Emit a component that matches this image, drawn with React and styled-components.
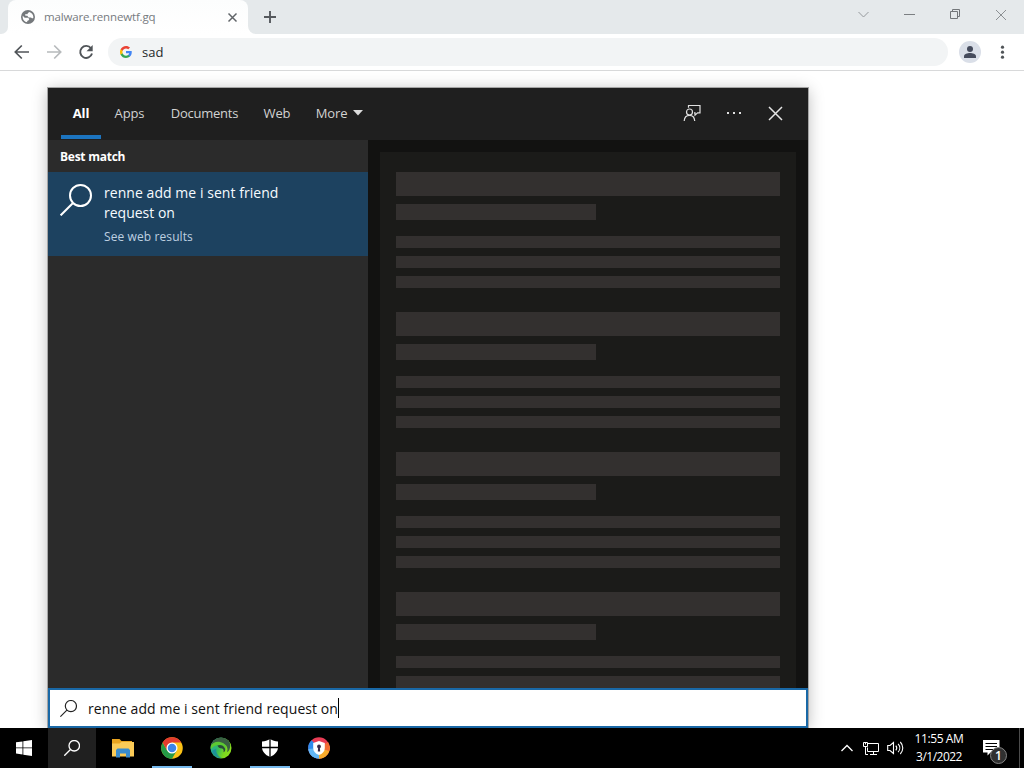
import React from "react";
import styled, { createGlobalStyle, css } from "styled-components";

const Global = createGlobalStyle`
  * { box-sizing: border-box; }
  body { margin: 0; background: #fff; overflow: hidden; font-family: "Open Sans", "Noto Sans", sans-serif; }
  svg { display: block; flex: none; }
`;

const Screen = styled.div`
  position: relative;
  width: 1024px;
  height: 768px;
  display: flex;
  flex-direction: column;
  background: #fff;
  overflow: hidden;
`;

const Label = styled.span`
  display: block;
  white-space: nowrap;
  font-size: ${(p) => p.$size || 13}px;
  font-weight: ${(p) => p.$weight || 400};
  line-height: ${(p) => p.$line || 20}px;
  letter-spacing: ${(p) => p.$track || 0}px;
  color: ${(p) => p.$color || "inherit"};
`;

/* Browser */
const TabStrip = styled.div`
  display: flex;
  height: 34px;
  background: #e5e9eb;
`;
const StripStart = styled.div`
  width: 8px;
  background: #e5e9eb;
  border-bottom-right-radius: 7px;
`;
const TabBase = styled.div`
  display: flex;
  background: #fff;
`;
const Tab = styled.div`
  display: flex;
  align-items: center;
  width: 240px;
  height: 34px;
  padding: 0 10px 0 12px;
  background: linear-gradient(#fcfdfd, #fff);
  border-radius: 8px 8px 0 0;
`;
const TabTitle = styled(Label)`
  flex: 1;
  margin-left: 8px;
`;
const StripRest = styled.div`
  display: flex;
  flex: 1;
  align-items: center;
  background: #e5e9eb;
  border-bottom-left-radius: 8px;
  padding: 0 17px 0 14px;
`;
const StripBack = styled.div`
  display: flex;
  flex: 1;
  background: linear-gradient(#e5e9eb 0 20px, #fff 20px);
`;
const WindowControls = styled.div`
  display: flex;
  align-items: center;
  gap: 30px;
  margin-left: auto;
  margin-top: -5px;
`;
const Toolbar = styled.div`
  display: flex;
  align-items: center;
  height: 37px;
  padding: 0 17px 0 14px;
  border-bottom: 1px solid #d8d9da;
`;
const NavIcons = styled.div`
  display: flex;
  gap: 16px;
`;
const Address = styled.div`
  display: flex;
  align-items: center;
  flex: 1;
  height: 28px;
  margin: 0 11px 0 14px;
  padding-left: 12px;
  border-radius: 14px;
  background: #f2f4f5;
`;
const AddressText = styled(Label)`
  margin-left: 10px;
`;
const Avatar = styled.div`
  display: flex;
  width: 22px;
  height: 22px;
  border-radius: 50%;
  background: #dadfe8;
  align-items: center;
  justify-content: center;
  margin-right: 17px;
`;
const Page = styled.div`
  flex: 1;
  background: #fff;
`;

/* Search flyout, floating above the page */
const Flyout = styled.div`
  position: absolute;
  left: 48px;
  top: 88px;
  width: 760px;
  height: 640px;
  display: flex;
  flex-direction: column;
  background: #1f1f1f;
  box-shadow: 0 0 0 1px #a5a5a5, 0 2px 15px rgba(0, 0, 0, 0.28);
`;
const Header = styled.div`
  display: flex;
  height: 52px;
  padding: 0 24px 0 13px;
`;
const Scope = styled.div`
  display: flex;
  align-items: center;
  justify-content: center;
  width: ${(p) => p.$width}px;
  height: 51px;
  padding-top: ${(p) => (p.$active ? 3 : 0)}px;
  padding-bottom: ${(p) => (p.$active ? 0 : 1)}px;
  margin-right: ${(p) => p.$gap || 0}px;
  border-bottom: ${(p) => (p.$active ? "4px solid #1c74bf" : "0")};
  gap: 6px;
`;
const HeaderActions = styled.div`
  display: flex;
  align-items: center;
  margin-left: auto;
  gap: 24px;
  padding-bottom: 2px;
`;
const Body = styled.div`
  display: flex;
  flex: 1;
  min-height: 0;
`;
const Results = styled.div`
  width: 320px;
  background: #2b2b2b;
`;
const GroupTitle = styled.div`
  height: 32px;
  padding: 7px 12px;
`;
const Match = styled.div`
  display: flex;
  height: 84px;
  padding: 11px 12px;
  gap: 12px;
  background: #1d4260;
`;
const MatchIcon = styled.div`
  padding-top: 1px;
`;
const MatchText = styled.div`
  display: flex;
  flex-direction: column;
`;
const MatchHint = styled(Label)`
  margin-top: 4px;
`;
const Preview = styled.div`
  flex: 1;
  overflow: hidden;
  padding: 12px 12px 0;
  background: #121211;
`;
const PreviewCard = styled.div`
  height: 100%;
  padding: 20px 16px 0;
  background: #1b1b19;
`;
const Skeleton = styled.div`
  display: flex;
  flex-direction: column;
  gap: 8px;
  height: 140px;
`;
const Bar = styled.div`
  flex: none;
  width: ${(p) => p.$width || 384}px;
  height: ${(p) => p.$height || 12}px;
  margin-top: ${(p) => p.$top || 0}px;
  background: #33302f;
`;
const SearchBox = styled.div`
  display: flex;
  align-items: center;
  height: 40px;
  padding: 0 10px;
  border: 2px solid #1968a6;
  background: #fff;
`;
const Query = styled(Label)`
  margin-left: 11px;
  padding-top: 1px;
`;
const Caret = styled.div`
  width: 1px;
  height: 20px;
  background: #000;
`;

/* Taskbar */
const Taskbar = styled.div`
  position: relative;
  z-index: 1;
  display: flex;
  height: 40px;
  background: #000;
`;
const TaskButton = styled.div`
  display: flex;
  align-items: center;
  justify-content: center;
  width: ${(p) => p.$width || 49}px;
  height: 40px;
  background: ${(p) => (p.$pressed ? "#202020" : "transparent")};
  ${(p) =>
    p.$running &&
    css`
      background: linear-gradient(#76b9ed, #76b9ed) center bottom / 40px 2px no-repeat;
    `}
`;
const Tray = styled.div`
  display: flex;
  align-items: center;
  margin-left: auto;
`;
const TrayIcons = styled.div`
  display: flex;
  align-items: center;
  gap: 8px;
`;
const Clock = styled.div`
  display: flex;
  flex-direction: column;
  align-items: center;
  width: 68px;
  margin: 0 10px 0 1px;
`;
const Notices = styled.div`
  position: relative;
  width: 29px;
  height: 40px;
  margin-right: 7px;
  padding-top: 12px;
`;
const Badge = styled.div`
  position: absolute;
  left: 7px;
  top: 19px;
  width: 17px;
  height: 17px;
  border: 1px solid #858585;
  border-radius: 50%;
  background: #303030;
  color: #fff;
  font-size: 12px;
  font-weight: 600;
  line-height: 15px;
  text-align: center;
`;
const ShowDesktop = styled.div`
  width: 5px;
  height: 40px;
  border-left: 1px solid #4b4b4b;
`;

const Globe = () => (
  <svg width="16" height="16" viewBox="0 0 24 24">
    <path fill="#75797c" d="M12 1.500a10.500 10.500 0 1 0 0 21 10.500 10.500 0 0 0 0-21zm-1.200 18.500C6.900 19.500 4 16.100 4 12c0-.6.100-1.200.2-1.800L7 13h5l2 2-1 2-2.200 1zm7-6c-.3-.8-1-1.400-1.900-1.400h-3L11 10H8V7.500l3 .5 1-2 2-1.500c3 .7 6 3.800 6 7.500 0 .8-.1 1.500-.4 2z" />
  </svg>
);
const Cross = ({ size, color, w, pad = 1 }) => (
  <svg width={size} height={size} viewBox={`0 0 ${size} ${size}`} fill="none" stroke={color} strokeWidth={w}>
    <path d={`M${pad} ${pad}L${size - pad} ${size - pad}M${size - pad} ${pad}L${pad} ${size - pad}`} />
  </svg>
);
const Plus = () => (
  <svg width="16" height="16" fill="none" stroke="#55595d" strokeWidth="1.900">
    <path d="M8 2v12M2 8h12" />
  </svg>
);
const Arrow = ({ color, flip }) => (
  <svg width="16" height="16" viewBox="0 0 16 16" fill="none" stroke={color} strokeWidth="1.700">
    <path d={flip ? "M1 8h13M8.200 1.500L14.700 8l-6.500 6.500" : "M15 8H2M7.800 1.500L1.300 8l6.500 6.500"} />
  </svg>
);
const Reload = () => (
  <svg width="16" height="16" viewBox="0 0 16 16">
    <path d="M13 4.300A6 6 0 1 0 14 9.500" fill="none" stroke="#505458" strokeWidth="1.900" />
    <path d="M14.700 1v6.200H8.500z" fill="#505458" />
  </svg>
);
const Google = () => (
  <svg width="12" height="12" viewBox="0 0 48 48">
    <path fill="#4285f4" d="M47 24.500c0-1.600-.2-3.200-.4-4.500H24v9h13c-.6 3-2.300 5.500-4.800 7.200v6h7.700C44.400 38 47 31.800 47 24.500z" />
    <path fill="#34a853" d="M24 48c6.500 0 11.900-2.100 15.900-5.800l-7.700-6c-2.200 1.400-4.900 2.300-8.200 2.300-6.300 0-11.600-4.200-13.500-9.900h-8v6.200C6.500 42.700 14.600 48 24 48z" />
    <path fill="#fbbc05" d="M10.500 28.600a14 14 0 0 1 0-9.200v-6.200h-8a24 24 0 0 0 0 21.600z" />
    <path fill="#ea4335" d="M24 9.500c3.500 0 6.700 1.200 9.200 3.600l6.900-6.900C35.900 2.400 30.500 0 24 0 14.600 0 6.500 5.300 2.500 13.200l8 6.200C12.400 13.700 17.700 9.500 24 9.500z" />
  </svg>
);
const Person = () => (
  <svg width="14" height="14" viewBox="0 0 14 14" fill="#454b5c">
    <circle cx="7" cy="4" r="3" />
    <path d="M1 13v-1.800C1 9.200 4.500 8 7 8s6 1.200 6 3.200V13z" />
  </svg>
);
const Kebab = () => (
  <svg width="9" height="16" fill="#505458">
    <circle cx="4.500" cy="3.200" r="1.600" />
    <circle cx="4.500" cy="8.200" r="1.600" />
    <circle cx="4.500" cy="13.200" r="1.600" />
  </svg>
);
const Magnifier = ({ size, color, w }) => (
  <svg width={size} height={size} viewBox="0 0 32 32" fill="none" stroke={color} strokeWidth={w}>
    <circle cx="20.500" cy="11.500" r="10.500" />
    <path d="M13 19L.6 31.400" />
  </svg>
);
const Feedback = () => (
  <svg width="18" height="18" viewBox="0 0 18 18" fill="none" stroke="#e0e0e0" strokeWidth="1.200">
    <circle cx="6.500" cy="8" r="3" />
    <path d="M1.200 17c.2-3.500 2-5.700 5.300-5.700s5 2.200 5.200 5.700" />
    <path d="M5.500 3.800V1.500H17v7.300h-2.400L12 11.200V8.800h-1" />
  </svg>
);
const Dots = () => (
  <svg width="18" height="18" fill="#e0e0e0">
    <rect x="2" y="8" width="2" height="2" />
    <rect x="8" y="8" width="2" height="2" />
    <rect x="14" y="8" width="2" height="2" />
  </svg>
);
const WindowsLogo = () => (
  <svg width="16" height="16" viewBox="0 0 16 16" fill="#fff">
    <path d="M0 2.300L6.500 1.400v6.100H0zM7.300 1.300L16 0v7.500H7.300zM0 8.300h6.500v6.200L0 13.600zM7.300 8.300H16v7.600l-8.700-1.200z" />
  </svg>
);
const Folder = () => (
  <svg width="24" height="19" viewBox="-2 0 24 19">
    <path fill="#e9a41f" d="M0 0h7.500l2 2H20v4H0z" />
    <path fill="#fbcb57" d="M0 4.500h7.500l2-1.500H22v14.500H0z" />
    <path fill="#3a8ccd" d="M4 18.500V11l1.500-1.500h11L18 11v7.500h-4V14.500H8v4z" />
  </svg>
);
const Chrome = () => (
  <svg width="22" height="22" viewBox="0 0 48 48">
    <circle cx="24" cy="24" r="23.500" fill="#fbc116" />
    <path fill="#e33b2e" d="M24 24L3.600 12.200A23.500 23.500 0 0 1 44.400 12.200H24z" />
    <path fill="#249a46" d="M24 24L13.800 29.900 3.600 12.200A23.500 23.500 0 0 0 24 47.500L34.200 29.900z" />
    <path fill="#e33b2e" d="M3.600 12.200L13.800 29.900 24 12.200z" />
    <circle cx="24" cy="24" r="12" fill="#fff" />
    <circle cx="24" cy="24" r="9.300" fill="#3d84e8" />
  </svg>
);
const EdgeDev = () => (
  <svg width="22" height="22" viewBox="0 0 22 22">
    <defs>
      <clipPath id="edgeDisc">
        <circle cx="11" cy="11" r="10.500" />
      </clipPath>
      <linearGradient id="edgeBody" x1="0" y1="0.300" x2="1" y2="0.700">
        <stop offset="0" stopColor="#1da6b8" />
        <stop offset=".4" stopColor="#35bd5a" />
        <stop offset=".7" stopColor="#7bd91f" />
        <stop offset="1" stopColor="#8fe31c" />
      </linearGradient>
    </defs>
    <g clipPath="url(#edgeDisc)">
      <rect width="22" height="22" fill="url(#edgeBody)" />
      <path fill="#3a6042" d="M0 8C2 2 7-1 12 0c5 .5 7.500 3.500 8 6.500.7 4-.5 7.200-3 8.700 1.700-5-1.200-9-6.500-9.200C6 6 3 7 0 10z" />
      <path fill="#5cc832" d="M0 9.500C2 6 6 4.200 10 4.900c4.500.8 7 4.500 6 8.500C14.500 9.500 12 7.700 8.500 8 5 8.200 2.500 10 .5 13z" />
      <path fill="#2b4a3a" d="M7.500 8.500C10 7.300 13.500 8 15 11.500c.6 1.700 0 3.200-1.500 3.700.7-2.700-.7-4.200-3-4C9 11 8 10 7.500 8.500z" />
      <path fill="#1681ad" d="M6.500 11.500c-1 3.500.8 7.500 5.500 9.500H8C4.500 19.500 2.500 17 2 14c1.500-1.200 3-2 4.500-2.500z" opacity=".7" />
    </g>
  </svg>
);
const Shield = () => (
  <svg width="18" height="20" viewBox="0 0 18 20">
    <path fill="#fff" d="M9 1c2.500 1.600 5 2.300 8 2.400V9c0 4.500-3 7.800-8 10-5-2.200-8-5.500-8-10V3.400C4 3.300 6.500 2.600 9 1z" />
    <path stroke="#000" strokeWidth="1.300" d="M9 0v20M0 9.500h18" />
  </svg>
);
const PrivateBrowser = () => (
  <svg width="22" height="22" viewBox="0 0 22 22">
    <circle cx="11" cy="11" r="10.700" fill="#e93c55" />
    <path fill="#2d8bee" d="M11 11L3.500 3.300A10.700 10.700 0 0 0 9.500 21.600z" />
    <path fill="#63b7f5" d="M11 11L.3 12A10.700 10.700 0 0 0 12 21.700z" />
    <path fill="#f8ab2b" d="M11 11l10.600-2A10.700 10.700 0 0 1 11 21.700z" />
    <path fill="#f36b36" d="M11 11l9-6a10.700 10.700 0 0 1 1.200 9z" />
    <path fill="#fff" d="M11 4l5.800 2v5c0 3.500-2.300 5.800-5.800 7-3.500-1.200-5.800-3.500-5.800-7V6z" />
    <circle cx="11" cy="9.500" r="1.900" fill="#382b4c" />
    <path fill="#382b4c" d="M10.200 10h1.600l.4 4.500H9.800z" />
  </svg>
);
const Network = () => (
  <svg width="17" height="16" viewBox="0 0 17 16" fill="none" stroke="#fff">
    <path d="M6 3.500h10.500v8H5.500v-4M11.500 11.500v3M8 14.500h7" />
    <path d="M1.500 2.500h4v4h-4zM3.500 6.500v8H6M3.500 3v1.500" />
  </svg>
);
const Speaker = () => (
  <svg width="17" height="16" viewBox="0 0 17 16" fill="none" stroke="#fff" strokeWidth="1.100">
    <path d="M.7 5.500H3l3.500-3v11l-3.500-3H.7zM8.800 5.700c1.100 1.300 1.100 3.300 0 4.600M11.100 3.800c2.200 2.400 2.200 6 0 8.400M13.300 2c3.300 3.400 3.300 8.600 0 12" />
  </svg>
);
const ActionCenter = () => (
  <svg width="17" height="16" viewBox="0 0 17 16">
    <path fill="#fff" d="M0 0h16.500v12.500H7.500L4.500 15.500v-3H0z" />
    <path stroke="#000" strokeWidth="1.100" d="M2.500 3.500H14M2.500 6.500H14M2.500 9.500H10" />
  </svg>
);

const scopes = [
  { name: "Apps", width: 33, gap: 25, track: -0.1 },
  { name: "Documents", width: 67, gap: 25, track: -0.25 },
  { name: "Web", width: 28, gap: 25, track: -0.1 },
];

export default function App() {
  return (
    <Screen>
      <Global />
      <TabStrip>
        <TabBase>
          <StripStart />
        </TabBase>
        <Tab>
          <Globe />
          <TabTitle $size={11.5} $color="#777b7e" $track={-0.15}>malware.rennewtf.gq</TabTitle>
          <Cross size={11} color="#606468" w={1.5} pad={1.5} />
        </Tab>
        <StripBack>
          <StripRest>
            <Plus />
            <WindowControls>
              <svg width="16" height="12" fill="none" stroke="#969a9d">
                <path d="M1.500 3l5 5 5-5" />
              </svg>
              <svg width="16" height="12" fill="none" stroke="#7b7f82">
                <path d="M1 5.500h11" />
              </svg>
              <svg width="16" height="12" fill="none" stroke="#73777a">
                <path d="M1.500 2.500h7v7h-7zM3.500 2.500v-2h7v7h-2" />
              </svg>
              <Cross size={12} color="#8c9093" w={1} />
            </WindowControls>
          </StripRest>
        </StripBack>
      </TabStrip>
      <Toolbar>
        <NavIcons>
          <Arrow color="#505458" />
          <Arrow color="#b7babc" flip />
          <Reload />
        </NavIcons>
        <Address>
          <Google />
          <AddressText $size={13} $color="#25282a">sad</AddressText>
        </Address>
        <Avatar>
          <Person />
        </Avatar>
        <Kebab />
      </Toolbar>
      <Page />
      <Taskbar>
        <TaskButton $width={48}><WindowsLogo /></TaskButton>
        <TaskButton $width={48} $pressed><Magnifier size={16} color="#fff" w={2.6} /></TaskButton>
        <TaskButton $width={52}><Folder /></TaskButton>
        <TaskButton $width={48} $running><Chrome /></TaskButton>
        <TaskButton><EdgeDev /></TaskButton>
        <TaskButton $running><Shield /></TaskButton>
        <TaskButton><PrivateBrowser /></TaskButton>
        <Tray>
          <TrayIcons>
            <svg width="14" height="12" fill="none" stroke="#fff" strokeWidth="1.300">
              <path d="M1.500 9L7 3.500 12.500 9" />
            </svg>
            <Network />
            <Speaker />
          </TrayIcons>
          <Clock>
            <Label $size={12} $line={18} $color="#fff" $track={-0.4}>11:55 AM</Label>
            <Label $size={12} $line={18} $color="#fff" $track={-0.5}>3/1/2022</Label>
          </Clock>
          <Notices>
            <ActionCenter />
            <Badge>1</Badge>
          </Notices>
          <ShowDesktop />
        </Tray>
      </Taskbar>
      <Flyout>
        <Header>
          <Scope $width={40} $gap={12} $active>
            <Label $weight={700} $color="#fff" $track={-0.2}>All</Label>
          </Scope>
          {scopes.map((s) => (
            <Scope key={s.name} $width={s.width} $gap={s.gap}>
              <Label $color="#d2d2d2" $track={s.track}>{s.name}</Label>
            </Scope>
          ))}
          <Scope $width={47}>
            <Label $color="#d2d2d2" $track={-0.1}>More</Label>
            <svg width="10" height="6" fill="#dcdcdc">
              <path d="M0 0h10L5 5.500z" />
            </svg>
          </Scope>
          <HeaderActions>
            <Feedback />
            <Dots />
            <Cross size={17} color="#e4e4e4" w={1.5} pad={2} />
          </HeaderActions>
        </Header>
        <Body>
          <Results>
            <GroupTitle>
              <Label $size={12} $weight={700} $color="#fff" $track={-0.25}>Best match</Label>
            </GroupTitle>
            <Match>
              <MatchIcon>
                <Magnifier size={32} color="#fff" w={2} />
              </MatchIcon>
              <MatchText>
                <Label $size={14} $color="#f6fbff" $track={0.05}>renne add me i sent friend</Label>
                <Label $size={14} $color="#f6fbff">request on</Label>
                <MatchHint $size={12} $color="#bdd0e0" $track={0.1}>See web results</MatchHint>
              </MatchText>
            </Match>
          </Results>
          <Preview>
            <PreviewCard>
              {[0, 1, 2, 3].map((i) => (
                <Skeleton key={i}>
                  <Bar $height={24} />
                  <Bar $height={16} $width={200} />
                  <Bar $top={8} />
                  <Bar />
                  <Bar />
                </Skeleton>
              ))}
            </PreviewCard>
          </Preview>
        </Body>
        <SearchBox>
          <Magnifier size={17} color="#222" w={2.2} />
          <Query $size={14} $color="#111" $track={0.06}>renne add me i sent friend request on</Query>
          <Caret />
        </SearchBox>
      </Flyout>
    </Screen>
  );
}
